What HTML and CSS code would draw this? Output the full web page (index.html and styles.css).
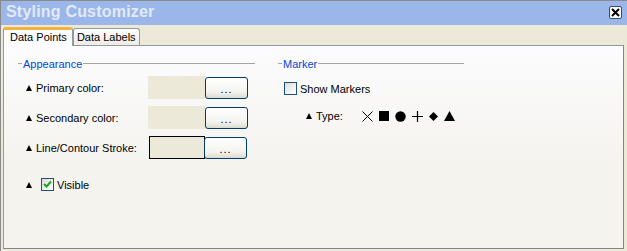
FILE: index.html
```html
<!DOCTYPE html>
<html lang="en">
<head>
    <meta charset="UTF-8">
    <title>Styling Customizer</title>
    <link rel="stylesheet" href="styles.css">
</head>
<body>
    <div class="window">
        <div class="title-bar">
            <span class="title">Styling Customizer</span>
            <span class="close-btn">
                <svg width="9" height="9" viewBox="0 0 9 9"><path d="M1 1 L8 8 M8 1 L1 8" stroke="#000" stroke-width="2"/></svg>
            </span>
        </div>

        <div class="tabs">
            <div class="tab active">Data Points</div>
            <div class="tab">Data Labels</div>
        </div>

        <div class="panel">
            <div class="group appearance">
                <div class="group-title"><span>Appearance</span></div>

                <div class="field first">
                    <span class="bullet"></span>
                    <span class="label">Primary color:</span>
                    <span class="swatch"></span>
                    <span class="button">...</span>
                </div>
                <div class="field">
                    <span class="bullet"></span>
                    <span class="label">Secondary color:</span>
                    <span class="swatch"></span>
                    <span class="button">...</span>
                </div>
                <div class="field">
                    <span class="bullet"></span>
                    <span class="label">Line/Contour Stroke:</span>
                    <span class="swatch outlined"></span>
                    <span class="button">...</span>
                </div>

                <div class="check-row visible-row">
                    <span class="bullet"></span>
                    <span class="checkbox checked">
                        <svg width="9" height="9" viewBox="0 0 9 9"><path d="M1 4 L3.5 6.5 L8 1.5" fill="none" stroke="#21a121" stroke-width="2"/></svg>
                    </span>
                    <span>Visible</span>
                </div>
            </div>

            <div class="group marker">
                <div class="group-title"><span>Marker</span></div>

                <div class="check-row markers-row">
                    <span class="checkbox"></span>
                    <span>Show Markers</span>
                </div>

                <div class="type-row">
                    <span class="bullet"></span>
                    <span class="label">Type:</span>
                    <div class="symbols">
                        <svg width="11" height="11" viewBox="0 0 11 11"><path d="M0.5 0.5 L10.5 10.5 M10.5 0.5 L0.5 10.5" stroke="#000" stroke-width="1"/></svg>
                        <svg width="10" height="10" viewBox="0 0 10 10"><rect width="10" height="10" fill="#000"/></svg>
                        <svg width="11" height="11" viewBox="0 0 11 11"><circle cx="5.5" cy="5.5" r="5.2" fill="#000"/></svg>
                        <svg width="11" height="11" viewBox="0 0 11 11"><path d="M5.5 0 V11 M0 5.5 H11" stroke="#000" stroke-width="1.2"/></svg>
                        <svg width="9" height="9" viewBox="0 0 9 9"><path d="M4.5 0 L9 4.5 L4.5 9 L0 4.5 Z" fill="#000"/></svg>
                        <svg width="11" height="10" viewBox="0 0 11 10"><path d="M5.5 0 L11 10 L0 10 Z" fill="#000"/></svg>
                    </div>
                </div>
            </div>
        </div>
    </div>
</body>
</html>
```

FILE: styles.css
```css
* {
    margin: 0;
    padding: 0;
    box-sizing: border-box;
}

body {
    font-family: 'Liberation Sans', Arial, sans-serif;
    font-size: 11px;
    color: #000;
    background: #ece9d8;
}

.window {
    width: 627px;
    height: 251px;
    background: #ece9d8;
    border-left: 1px solid #8a8a8a;
    border-top: 1px solid #8a8a8a;
}

.title-bar {
    height: 24px;
    background: #9bb7e9;
    display: flex;
    align-items: center;
    justify-content: space-between;
    padding: 0 5px 0 5px;
}

.title {
    font-size: 16px;
    font-weight: bold;
    color: #e2eaf9;
    letter-spacing: 0.2px;
    margin-top: -2px;
}

.close-btn {
    width: 13px;
    height: 13px;
    background: #fff;
    border: 1px solid #2d4d7a;
    border-radius: 2px;
    display: flex;
    align-items: center;
    justify-content: center;
    margin-top: -2px;
}

.tabs {
    display: flex;
    align-items: flex-end;
    padding: 1px 0 0 2px;
    height: 20px;
    position: relative;
    z-index: 1;
}

.tab {
    height: 17px;
    padding: 0 3px;
    border: 1px solid #919b9c;
    border-bottom: none;
    border-radius: 3px 3px 0 0;
    background: linear-gradient(#fefefe, #ecebe6);
    line-height: 16px;
}

.tab.active {
    height: 19px;
    padding: 0 5px 0 6px;
    background: #fcfcfe;
    border-top: 3px solid #f4b43c;
    line-height: 15px;
    margin-bottom: -1px;
}

.panel {
    width: 621px;
    height: 204px;
    margin-left: 2px;
    border: 1px solid #919b9c;
    border-right-color: #7d8590;
    border-bottom-color: #7d8590;
    background: linear-gradient(#fcfcfe, #f4f3ee 60%);
    display: flex;
    gap: 23px;
    padding: 11px 0 0 14px;
}

.group.appearance {
    width: 237px;
}

.group.marker {
    width: 186px;
}

.group-title {
    display: flex;
    align-items: center;
    color: #0046d5;
    height: 13px;
}

.group-title::before {
    content: "";
    width: 4px;
    border-top: 1px solid #a5a5a5;
}

.group-title::after {
    content: "";
    flex: 1;
    border-top: 1px solid #a5a5a5;
}

.group-title span {
    padding: 0 1px;
}

.bullet {
    width: 0;
    height: 0;
    border-left: 3px solid transparent;
    border-right: 3px solid transparent;
    border-bottom: 6px solid #000;
    margin-right: 4px;
}

.field {
    display: flex;
    align-items: center;
    height: 23px;
    margin-top: 7px;
    padding-left: 8px;
}

.field.first {
    margin-top: 6px;
}

.field .label {
    width: 112px;
}

.swatch {
    width: 58px;
    height: 23px;
    background: #ece9d8;
}

.swatch.outlined {
    border: 1px solid #000;
    margin-left: 1px;
    width: 56px;
}

.button {
    width: 43px;
    height: 22px;
    margin-left: -1px;
    border: 1px solid #003c74;
    border-radius: 3px;
    background: linear-gradient(#ffffff, #f3f3ef 70%, #dcdad0);
    text-align: center;
    line-height: 22px;
    letter-spacing: 1px;
}

.check-row {
    display: flex;
    align-items: center;
}

.checkbox {
    width: 13px;
    height: 13px;
    border: 1px solid #1c5180;
    background: linear-gradient(135deg, #dcdcd7, #fff);
    display: flex;
    align-items: center;
    justify-content: center;
    margin-right: 3px;
}

.visible-row {
    margin-top: 19px;
    padding-left: 8px;
}

.visible-row .bullet {
    margin-right: 9px;
}

.markers-row {
    margin-top: 12px;
    padding-left: 6px;
}

.type-row {
    display: flex;
    align-items: center;
    margin-top: 15px;
    padding-left: 28px;
}

.type-row .label {
    width: 46px;
}

.symbols {
    display: flex;
    align-items: center;
    gap: 6px;
}
```
